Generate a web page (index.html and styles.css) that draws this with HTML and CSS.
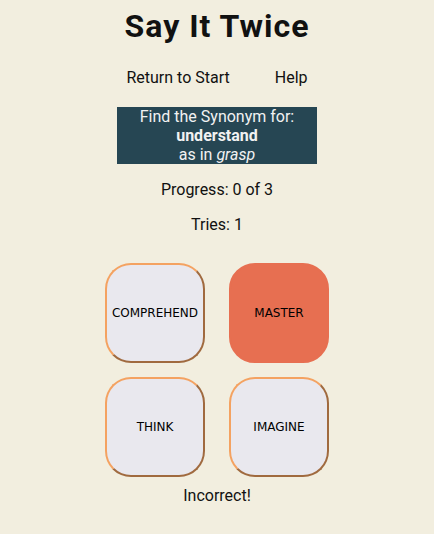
FILE: index.html
```html
<!DOCTYPE html>
<html>
<head>
<meta charset="utf-8">
<link rel="stylesheet" href="styles.css">
</head>
<body>
<div class="app">
  <h1 class="title">Say It Twice</h1>
  <nav class="nav">
    <span class="nav-link">Return to Start</span>
    <span class="nav-link">Help</span>
  </nav>
  <div class="prompt">
    <div>Find the Synonym for:</div>
    <div class="word">understand</div>
    <div>as in <em>grasp</em></div>
  </div>
  <p class="stat">Progress: 0 of 3</p>
  <p class="stat">Tries: 1</p>
  <div class="choices">
    <button class="choice">COMPREHEND</button>
    <button class="choice wrong">MASTER</button>
    <button class="choice">THINK</button>
    <button class="choice">IMAGINE</button>
  </div>
  <p class="result">Incorrect!</p>
</div>
</body>
</html>
```
FILE: styles.css
```css
html, body {
  margin: 0;
  padding: 0;
  background: #f2eedf;
}
body {
  font-family: Roboto, "Liberation Sans", sans-serif;
  font-size: 16px;
  color: #111;
}
.app {
  display: flex;
  flex-direction: column;
  align-items: center;
}
.title {
  font-size: 32px;
  font-weight: 700;
  letter-spacing: 1px;
  margin: 7px 0 0;
  line-height: 38px;
}
.nav {
  display: flex;
  gap: 45px;
  margin-top: 23px;
  line-height: 19px;
}
.prompt {
  margin-top: 20px;
  width: 200px;
  background: #264653;
  color: #f2f2f2;
  text-align: center;
  line-height: 19px;
}
.word {
  font-weight: 700;
}
.stat {
  margin: 16px 0 0;
  line-height: 19px;
}
.choices {
  margin-top: 29px;
  display: grid;
  grid-template-columns: 100px 100px;
  column-gap: 24px;
  row-gap: 14px;
}
.choice {
  width: 100px;
  height: 100px;
  box-sizing: border-box;
  border: 2px outset #f4a261;
  border-radius: 26px;
  background: #e9e8ee;
  font-family: "DejaVu Sans", sans-serif;
  font-size: 12px;
  color: #000;
  padding: 0;
}
.choice.wrong {
  background: #e76f51;
  border: 2px solid #e76f51;
}
.result {
  margin: 9px 0 0;
  line-height: 19px;
}
```
